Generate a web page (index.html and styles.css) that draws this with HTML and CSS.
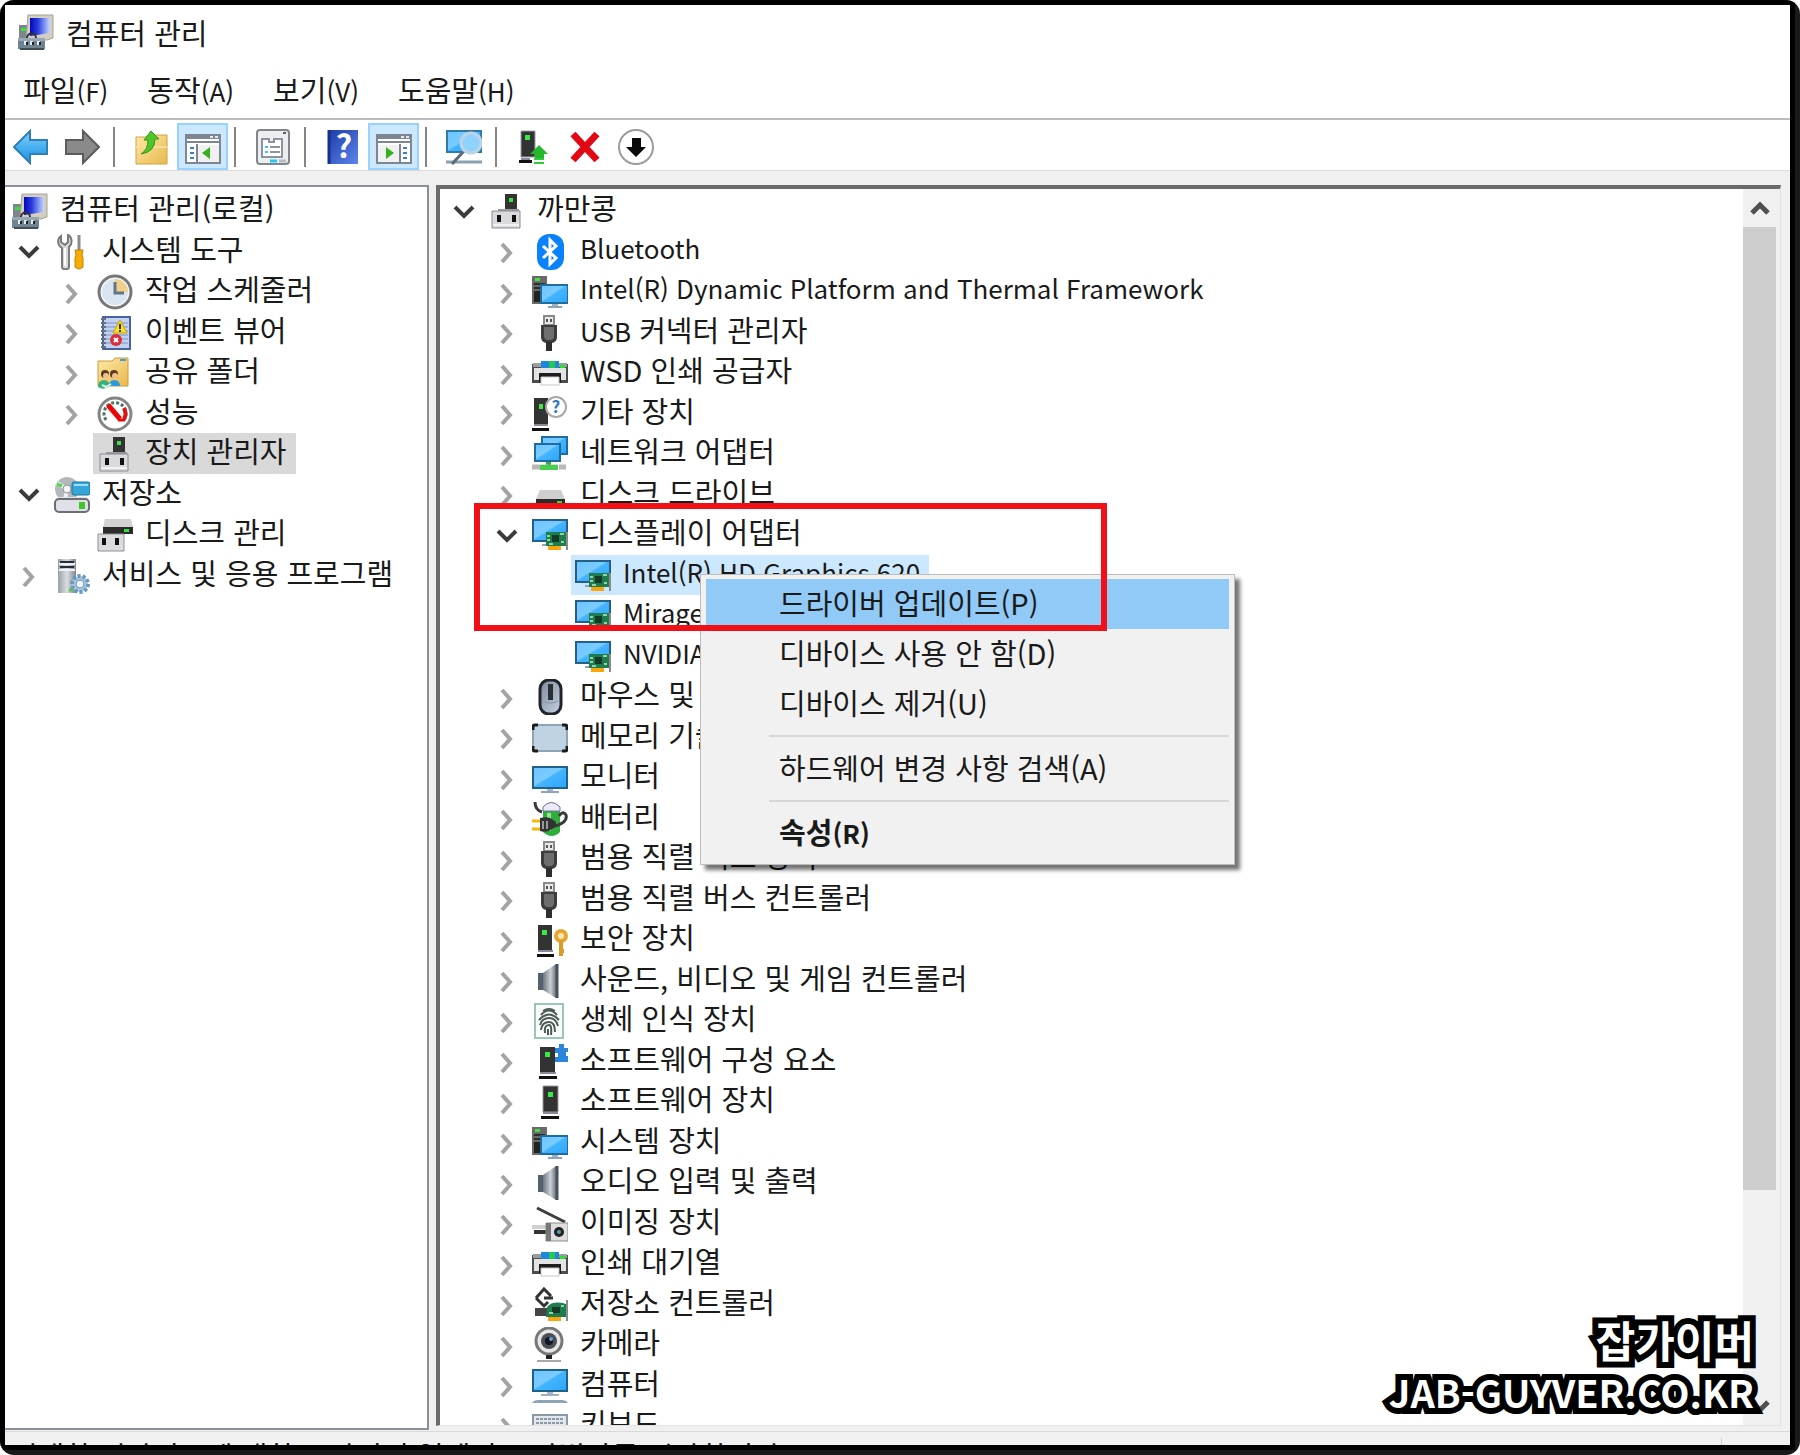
FILE: index.html
```html
<!DOCTYPE html>
<html lang="ko">
<head>
    <meta charset="UTF-8">
    <meta name="viewport" content="width=device-width, initial-scale=1.0">
    <title>컴퓨터 관리</title>
    <link rel="stylesheet" href="styles.css">
</head>
<body>
<!-- Icon set, every icon is drawn on a 36x36 grid -->
<svg class="sprite" aria-hidden="true">
    <defs>
        <linearGradient id="screen" x1="0" y1="0" x2="1" y2="1">
            <stop offset="0" stop-color="#6cc4ff"/><stop offset=".45" stop-color="#7accff"/><stop offset=".5" stop-color="#45b4ff"/><stop offset="1" stop-color="#2ba6fa"/>
        </linearGradient>
        <linearGradient id="navy" x1="0" y1="0" x2="1" y2="0">
            <stop offset="0" stop-color="#0606b8"/><stop offset=".4" stop-color="#2a3fe0"/><stop offset="1" stop-color="#c4d8ff"/>
        </linearGradient>
        <linearGradient id="steel" x1="0" y1="0" x2="1" y2="0">
            <stop offset="0" stop-color="#6d7780"/><stop offset=".5" stop-color="#c9d0d6"/><stop offset="1" stop-color="#4a545e"/>
        </linearGradient>
        <linearGradient id="folder" x1="0" y1="0" x2="1" y2="1">
            <stop offset="0" stop-color="#ffe9a6"/><stop offset="1" stop-color="#e8b84e"/>
        </linearGradient>
        <linearGradient id="blueArrow" x1="0" y1="0" x2="0" y2="1">
            <stop offset="0" stop-color="#7fd0ff"/><stop offset="1" stop-color="#1492e4"/>
        </linearGradient>
        <linearGradient id="help" x1="0" y1="0" x2="1" y2="1">
            <stop offset="0" stop-color="#1d3aa8"/><stop offset="1" stop-color="#5b86ec"/>
        </linearGradient>
        <linearGradient id="mouseBody" x1="0" y1="0" x2="1" y2="1">
            <stop offset="0" stop-color="#7d8a9b"/><stop offset="1" stop-color="#c6d3e2"/>
        </linearGradient>
    </defs>

    <symbol id="i-computer-mgmt" viewBox="0 0 36 36">
        <path d="M1 11h10v14H1z" fill="#7c868c"/><path d="M3 14h5v3H3z" fill="#38e038"/>
        <path d="M10 1h25v23l-6 2H8z" fill="#d3cec2" stroke="#a8a294"/>
        <path d="M12 4h20v15l-20 3z" fill="url(#navy)"/>
        <path d="M9 24c0-6 9-6 9 0" fill="none" stroke="#333" stroke-width="2"/>
        <path d="M0 25h27v10H0z" fill="#6f8492"/><path d="M0 24h27v3H0z" fill="#95a7b2"/>
        <path d="M2 35h24" stroke="#3f4d57" stroke-width="2"/>
        <path d="M6 27h3v4H6zM12 27h3v4h-3zM19 27h3v4h-3z" fill="#e4edf2"/><path d="M8 28h2v3H8zM14 28h2v3h-2zM21 28h2v3h-2z" fill="#222"/>
    </symbol>
    <symbol id="i-tools" viewBox="0 0 36 36">
        <path d="M7 2v6l4 3 3-3V1c4 2 5 8 1 12v20c0 3-7 3-7 0V14C3 11 3 5 7 2z" fill="#d9d9d9" stroke="#7b7b7b" stroke-width="2"/>
        <path d="M11 14v18" stroke="#fff" stroke-width="2"/>
        <path d="M25 1v16" stroke="#8c8c8c" stroke-width="3"/>
        <path d="M21 16h8l-1 5 1 3v9q-4 4-8 0v-9l1-3z" fill="#f7ab05" stroke="#c78100"/>
    </symbol>
    <symbol id="i-clock" viewBox="0 0 36 36">
        <circle cx="18" cy="18" r="16" fill="#f4f6f8" stroke="#777" stroke-width="3"/>
        <circle cx="18" cy="18" r="13" fill="#d9e6f1"/>
        <path d="M18 18V5a13 13 0 0 1 13 13z" fill="#f2ce8c"/>
        <path d="M18 8v11h9" fill="none" stroke="#5f7686" stroke-width="3"/>
    </symbol>
    <symbol id="i-event" viewBox="0 0 36 36">
        <path d="M6 2h27v32H6z" fill="#c2d2ee" stroke="#4b62a2" stroke-width="2"/>
        <path d="M9 8h22M9 12h22M9 16h22M9 20h22M9 24h22M9 28h22" stroke="#7a94c8"/>
        <path d="M4 4h5M4 8h5M4 12h5M4 16h5M4 20h5M4 24h5M4 28h5M4 32h5" stroke="#66707e" stroke-width="2"/>
        <path d="M23 5l7 13H16z" fill="#ffdf1f" stroke="#c8a400"/><path d="M23 9v5M23 15v2" stroke="#332" stroke-width="2"/>
        <circle cx="19" cy="25" r="6" fill="#d9303c"/><path d="M17 23l4 4M21 23l-4 4" stroke="#fff" stroke-width="2"/>
    </symbol>
    <symbol id="i-shared" viewBox="0 0 36 36">
        <path d="M1 6h14l3-3h13v28H1z" fill="url(#folder)" stroke="#c89c3c"/>
        <path d="M23 5h6" stroke="#4b9be0" stroke-width="2"/>
        <circle cx="8" cy="19" r="4" fill="#5a3a20"/><circle cx="17" cy="19" r="4" fill="#5a3a20"/>
        <circle cx="9" cy="21" r="3" fill="#f1c08c"/><circle cx="18" cy="21" r="3" fill="#f1c08c"/>
        <path d="M12 31q0-6 5-6 6 0 6 6z" fill="#2d9bd8"/><path d="M1 32q0-7 6-7 5 0 6 6-6 5-12 1z" fill="#36b27a"/>
        <path d="M5 30l4 2 5-3" fill="none" stroke="#d8f4e8" stroke-width="2"/>
    </symbol>
    <symbol id="i-gauge" viewBox="0 0 36 36">
        <circle cx="18" cy="18" r="16" fill="#fff" stroke="#858585" stroke-width="3"/>
        <path d="M9 24a11 11 0 1 1 18 0" fill="none" stroke="#4c7466" stroke-width="3" stroke-dasharray="3 2"/>
        <path d="M27 12q3 6 0 11" fill="none" stroke="#e01414" stroke-width="4"/>
        <path d="M11 9l12 14" stroke="#e80808" stroke-width="5"/><path d="M21 24h7" stroke="#e80808" stroke-width="3"/>
    </symbol>
    <symbol id="i-device-mgr" viewBox="0 0 36 36">
        <path d="M16 1h12v16H16z" fill="#333"/><path d="M20 5h4v4h-4z" fill="#3be04a"/>
        <path d="M9 16h21v3H9z" fill="#9a9a9e"/>
        <path d="M3 18h28v17H3z" fill="#d9d9de" stroke="#8c8c92"/><path d="M4 32h26" stroke="#f2f2f5" stroke-width="2"/>
        <path d="M8 22h4v7H8zM23 22h4v7h-4z" fill="#111"/>
    </symbol>
    <symbol id="i-storage" viewBox="0 0 36 36">
        <circle cx="13" cy="12" r="12" fill="#b4b8ba"/><path d="M3 6l10 6M13 12l-2 11" stroke="#eef0f0" stroke-width="4"/>
        <circle cx="13" cy="12" r="4" fill="#f4f4f4" stroke="#8f9496"/><path d="M3 7l5 2" stroke="#54d454" stroke-width="3"/>
        <rect x="18" y="5" width="18" height="13" rx="2" fill="#35a6d8" stroke="#18729c"/><path d="M20 8h14" stroke="#9ddcf5" stroke-width="2"/>
        <path d="M3 20h30l2 4H1z" fill="#e3e4e8"/><rect x="1" y="22" width="34" height="13" rx="4" fill="#dfe0e8" stroke="#6c6e76" stroke-width="2"/>
        <path d="M25 25h6v7h-6z" fill="#40c62d"/>
    </symbol>
    <symbol id="i-disk-mgmt" viewBox="0 0 36 36">
        <path d="M8 2h26l2 8H6z" fill="#d2d2d2"/><path d="M6 10h30v7H6z" fill="#2b2b2b"/><path d="M27 12h5v3h-5z" fill="#2fe03c"/>
        <path d="M1 17h26v17H1z" fill="#dcdce0" stroke="#909096"/><path d="M5 21h4v7H5zM18 21h4v7h-4z" fill="#111"/>
    </symbol>
    <symbol id="i-services" viewBox="0 0 36 36">
        <path d="M4 1h18v34H4z" fill="url(#steel)" opacity=".7"/><path d="M6 4h14M6 9h14" stroke="#23303a" stroke-width="2"/>
        <path d="M5 6h16M5 12h16" stroke="#eef2f4" stroke-width="2"/>
        <circle cx="26" cy="26" r="8" fill="#a9c8e4" stroke="#6f98be" stroke-width="4" stroke-dasharray="3 2"/><circle cx="26" cy="26" r="4" fill="#eef4fa" stroke="#6f98be"/>
        <path d="M15 32h4" stroke="#55c455" stroke-width="3"/>
    </symbol>
    <symbol id="i-bluetooth" viewBox="0 0 36 36">
        <rect x="5" y="0" width="27" height="36" rx="12" fill="#0a82fe"/>
        <path d="M11 12l13 12-6 6V6l6 6-13 12" fill="none" stroke="#fff" stroke-width="3"/>
    </symbol>
    <symbol id="i-system" viewBox="0 0 36 36">
        <path d="M0 2h15v28H0z" fill="#6a6a6a"/><path d="M2 10h11M2 14h11" stroke="#2c2c2c" stroke-width="2"/><path d="M2 17h8v11H2z" fill="#222"/>
        <path d="M3 4h5v3H3z" fill="#46e046"/>
        <path d="M9 11h27v18H9z" fill="url(#screen)" stroke="#1f6da0" stroke-width="2"/>
        <path d="M20 30h6v2h-6z" fill="#9fb2c4"/><path d="M16 33h14" stroke="#8ea3b8" stroke-width="2"/>
    </symbol>
    <symbol id="i-usb" viewBox="0 0 36 36">
        <path d="M12 1h10v9H12z" fill="#e8e8e8" stroke="#8a8a8a" stroke-width="2"/><path d="M14 4h2v3h-2zM18 4h2v3h-2z" fill="#555"/>
        <path d="M9 10h16v12q0 5-5 6h-6q-5-1-5-6z" fill="#3d3d3d"/><path d="M12 12h10v9q0 3-3 4h-4q-3-1-3-4z" fill="#6e6e6e"/>
        <path d="M14 27h6v9h-6z" fill="#2e2e2e"/>
    </symbol>
    <symbol id="i-printer" viewBox="0 0 36 36">
        <path d="M0 9h9v19H0zM27 9h9v19h-9z" fill="#4d4d4d"/><path d="M1 8h8v4H1zM27 8h8v4h-8z" fill="#9c9c9c"/>
        <path d="M9 6h18v8H9z" fill="#1d86e0"/><path d="M17 6h6v8h-6z" fill="#22c94e"/>
        <path d="M2 13h32v12H2z" fill="#e3e3e3"/><path d="M28 10h5v3h-5z" fill="#2be02b"/>
        <path d="M7 18h22v10H7z" fill="#1d1d1d"/><path d="M9 22h18v8H9z" fill="#fff" stroke="#c7c7c7"/>
    </symbol>
    <symbol id="i-unknown" viewBox="0 0 36 36">
        <path d="M2 2h14v28H2z" fill="#333"/><path d="M7 8h4v5H7z" fill="#38ea42"/><path d="M2 29h14" stroke="#889" stroke-width="2"/><path d="M0 32h17v3H0z" fill="#111"/>
        <circle cx="24" cy="11" r="10" fill="#fff" stroke="#a8a8a8" stroke-width="2"/>
        <text x="24" y="17" class="mark" text-anchor="middle" fill="#2a78c8">?</text>
    </symbol>
    <symbol id="i-network" viewBox="0 0 36 36">
        <path d="M10 1h25v17H10z" fill="url(#screen)" stroke="#1f6da0" stroke-width="2"/>
        <path d="M3 8h25v17H3z" fill="url(#screen)" stroke="#1f6da0" stroke-width="2"/>
        <path d="M14 26h5v3h-5z" fill="#3aa84a"/><path d="M0 31h34" stroke="#b8b8b8" stroke-width="5" stroke-dasharray="8 1"/><path d="M8 29h18v5H8z" fill="#49cf4d"/>
    </symbol>
    <symbol id="i-disk" viewBox="0 0 36 36">
        <path d="M8 13h21l4 9H4z" fill="#cfcfcf"/><path d="M4 22h29v8H4z" fill="#2a2a2a"/><path d="M25 24h5v4h-5z" fill="#2fe03c"/>
    </symbol>
    <symbol id="i-display" viewBox="0 0 36 36">
        <path d="M1 3h34v21H1z" fill="url(#screen)" stroke="#245f88" stroke-width="2"/>
        <path d="M10 28h8" stroke="#8ea3b8" stroke-width="2"/>
        <path d="M14 15h20v14H14z" fill="#1d7d4c"/><path d="M15 19h3M15 23h3M28 17h4M29 25h3M17 27h4" stroke="#8fd3a6" stroke-width="2"/><path d="M20 18h7v7h-7z" fill="#17392a"/>
        <path d="M35 15v18" stroke="#8b8b8b" stroke-width="2"/><path d="M16 29h13v4H16z" fill="#fba40c"/>
    </symbol>
    <symbol id="i-mouse" viewBox="0 0 36 36">
        <rect x="8" y="1" width="21" height="34" rx="9" fill="url(#mouseBody)" stroke="#20252b" stroke-width="3"/>
        <path d="M16 5h5v16h-5z" fill="#2b3036"/><path d="M11 22q7 4 15 0" fill="none" stroke="#8794a4"/>
    </symbol>
    <symbol id="i-memory" viewBox="0 0 36 36">
        <rect x="1" y="5" width="34" height="26" rx="3" fill="#c0d3e2" stroke="#8fa3b2" stroke-width="2"/>
        <path d="M1 10V7q0-2 2-2h3M30 5h3q2 0 2 2v3M1 26v3q0 2 2 2h3M30 31h3q2 0 2-2v-3" fill="none" stroke="#1c1c1c" stroke-width="3"/>
    </symbol>
    <symbol id="i-monitor" viewBox="0 0 36 36">
        <path d="M1 7h34v21H1z" fill="url(#screen)" stroke="#1f6288" stroke-width="2"/>
        <path d="M15 29h6v2h-6z" fill="#a7b6c4"/><path d="M9 32h18" stroke="#8ea3b8" stroke-width="2"/>
    </symbol>
    <symbol id="i-battery" viewBox="0 0 36 36">
        <path d="M11 6q8-9 17 0v25q-8 8-17 0z" fill="#2fae3c"/><path d="M11 6q8-9 17 0v4H11z" fill="#eceaf6" stroke="#7a6fa8"/>
        <path d="M15 12h4v18h-4z" fill="#8fe896"/>
        <path d="M3 1q0 8 7 10M24 25q12-4 10-11-3-5-7 1" fill="none" stroke="#3a3a3a" stroke-width="3"/>
        <path d="M0 20h9M0 28h9" stroke="#f2b90c" stroke-width="3"/>
        <path d="M8 17q8-2 12 1l4 3v5l-4 2q-4 4-12 2z" fill="#333"/><path d="M11 20v8M15 20v8" stroke="#999" stroke-width="2"/>
    </symbol>
    <symbol id="i-security" viewBox="0 0 36 36">
        <path d="M6 3h14v25H6z" fill="#333"/><path d="M10 8h5v5h-5z" fill="#38ea42"/><path d="M6 29h15" stroke="#889" stroke-width="2"/><path d="M5 32h17v3H5z" fill="#111"/>
        <circle cx="29" cy="14" r="5" fill="#fbe6b4" stroke="#e3a633" stroke-width="4"/><path d="M29 19v15M29 29h3" stroke="#d99a28" stroke-width="4"/>
    </symbol>
    <symbol id="i-sound" viewBox="0 0 36 36">
        <path d="M6 10h7v17H6z" fill="#56616b"/><path d="M11 10L24 1q4 17 0 34L11 27z" fill="url(#steel)"/><path d="M25 1v34" stroke="#48525c" stroke-width="3"/>
    </symbol>
    <symbol id="i-finger" viewBox="0 0 36 36">
        <path d="M3 1h28v34H3z" fill="#fafcfb" stroke="#9cc4ba" stroke-width="2"/>
        <path d="M9 12q8-9 16 0M7 17q10-11 20 0M8 22q2-7 9-7t9 8M9 27q1-8 8-8 6 0 6 10M13 30q-1-8 4-8 3 0 2 10M16 32v-6M11 8q6-4 12 0" fill="none" stroke="#4c5a57" stroke-width="2"/>
    </symbol>
    <symbol id="i-soft-comp" viewBox="0 0 36 36">
        <path d="M8 3h15v25H8z" fill="#333"/><path d="M13 8h5v5h-5z" fill="#38ea42"/><path d="M8 29h16" stroke="#889" stroke-width="2"/><path d="M7 32h18v3H7z" fill="#111"/>
        <path d="M23 4h4V0h5v4h4v4h-2v4h2v6H23v-5h3V9h-3z" fill="#2a86d8"/>
    </symbol>
    <symbol id="i-soft-dev" viewBox="0 0 36 36">
        <path d="M11 2h15v26H11z" fill="#333" stroke="#9a9a9a"/><path d="M16 8h5v5h-5z" fill="#38ea42"/><path d="M11 29h15" stroke="#889" stroke-width="2"/><path d="M9 32h18v3H9z" fill="#111"/>
    </symbol>
    <symbol id="i-imaging" viewBox="0 0 36 36">
        <path d="M5 2l28 14" stroke="#3c3c3c" stroke-width="3"/>
        <path d="M0 19h14v4H0z" fill="#cfcfcf"/><path d="M2 24h12v4H2z" fill="#333"/>
        <path d="M14 17h22v18H14z" fill="#dedede" stroke="#8d8d8d"/><path d="M14 17h5v18h-5z" fill="#777"/>
        <circle cx="27" cy="26" r="5" fill="#222"/><circle cx="27" cy="26" r="2" fill="#52a2a8"/>
    </symbol>
    <symbol id="i-storage-ctl" viewBox="0 0 36 36">
        <path d="M3 21h14v8H3z" fill="#444"/><path d="M4 11l8-9 7 7M4 11l8 8 4-4M12 11h9" fill="none" stroke="#333" stroke-width="3"/>
        <path d="M15 20q6-7 19-3v13H14z" fill="#1d7d4c"/><path d="M20 20h8v6h-8z" fill="#17392a"/><path d="M17 26h4M29 19h3" stroke="#8fd3a6" stroke-width="2"/>
        <path d="M35 13v21" stroke="#8b8b8b" stroke-width="2"/><path d="M16 30h13v4H16z" fill="#fba40c"/>
    </symbol>
    <symbol id="i-camera" viewBox="0 0 36 36">
        <circle cx="17" cy="14" r="13" fill="#e6e6e6" stroke="#777" stroke-width="3"/><circle cx="17" cy="14" r="8" fill="#4a4f55"/><circle cx="17" cy="14" r="4" fill="#10151f"/><circle cx="19" cy="12" r="2" fill="#6a9ad0"/>
        <path d="M14 28h6v4h-6z" fill="#222"/><path d="M5 34h24" stroke="#a8a8a8" stroke-width="2"/>
    </symbol>
    <symbol id="i-pc" viewBox="0 0 36 36">
        <path d="M1 2h34v21H1z" fill="url(#screen)" stroke="#1f6288" stroke-width="2"/>
        <path d="M15 24h6v2h-6z" fill="#a7b6c4"/><path d="M9 27h18" stroke="#9fb0c0" stroke-width="2"/><path d="M0 35q2-3 6-3h24q4 0 6 3z" fill="#8ea3b8"/>
    </symbol>
    <symbol id="i-keyboard" viewBox="0 0 36 36">
        <path d="M1 7h34v18H1z" fill="#e4e8ec" stroke="#8b98a5" stroke-width="2"/><path d="M4 11h28M4 15h28M4 19h28" stroke="#8b98a5" stroke-width="2" stroke-dasharray="3 1"/>
    </symbol>

    <symbol id="t-back" viewBox="0 0 36 36"><path d="M1 18L17 2v9h17v14H17v9z" fill="url(#blueArrow)" stroke="#2f7fb4" stroke-width="2"/></symbol>
    <symbol id="t-forward" viewBox="0 0 36 36"><path d="M35 18L19 2v9H2v14h17v9z" fill="#8a8a8a" stroke="#5c5c5c" stroke-width="2"/></symbol>
    <symbol id="t-up" viewBox="0 0 36 36">
        <path d="M2 8h13l3-2h15v29H2z" fill="url(#folder)" stroke="#cfa04a"/><path d="M2 18h31" stroke="#f7dc95" stroke-width="2"/>
        <path d="M7 25q7-4 7-14h-4l7-9 8 8h-4q0 13-14 15z" fill="#4fc42b" stroke="#2f9a1a"/>
    </symbol>
    <symbol id="t-tree" viewBox="0 0 36 36">
        <path d="M1 6h34v28H1z" fill="#fff" stroke="#7d8794" stroke-width="2"/><path d="M1 6h34v4H1z" fill="#7d8794"/><path d="M1 13h34M12 15v19" stroke="#7d8794" stroke-width="2"/><path d="M25 8h3M30 8h3" stroke="#e4e9f0" stroke-width="2"/>
        <path d="M13 16h21v17H13z" fill="#f1f1f1"/><path d="M5 19h4M5 24h4M5 29h4" stroke="#3c7fc4" stroke-width="2"/><path d="M25 18v12l-8-6z" fill="#35b020"/>
    </symbol>
    <symbol id="t-action" viewBox="0 0 36 36">
        <path d="M1 6h34v28H1z" fill="#fff" stroke="#7d8794" stroke-width="2"/><path d="M1 6h34v4H1z" fill="#7d8794"/><path d="M1 13h34M24 15v19" stroke="#7d8794" stroke-width="2"/><path d="M25 8h3M30 8h3" stroke="#e4e9f0" stroke-width="2"/>
        <path d="M2 16h21v17H2z" fill="#f1f1f1"/><path d="M27 19h4M27 24h4M27 29h4" stroke="#3c7fc4" stroke-width="2"/><path d="M10 18v12l8-6z" fill="#35b020"/>
    </symbol>
    <symbol id="t-props" viewBox="0 0 36 36">
        <rect x="2" y="1" width="32" height="34" rx="3" fill="#eceef0" stroke="#7f868e" stroke-width="2"/><path d="M28 4h3" stroke="#57606a" stroke-width="2"/>
        <path d="M7 10h7v3h5v-3h8v18H7z" fill="#fff" stroke="#8c94a0" stroke-width="2"/><path d="M15 18h10M15 23h10" stroke="#8c94a0" stroke-width="2"/><path d="M10 18h3M10 23h3" stroke="#37c8ee" stroke-width="2"/>
        <path d="M15 32h7" stroke="#22c8f4" stroke-width="3"/><path d="M24 32h7" stroke="#b6bcc2" stroke-width="3"/>
    </symbol>
    <symbol id="t-help" viewBox="0 0 36 36">
        <path d="M3 1h30v34H3z" fill="url(#help)"/><path d="M4 1v34" stroke="#16308e" stroke-width="3"/>
        <text x="19" y="29" class="help-mark" text-anchor="middle" fill="#fff">?</text>
    </symbol>
    <symbol id="t-scan" viewBox="0 0 36 36">
        <path d="M1 2h34v21H1z" fill="url(#screen)" stroke="#2f7ba8" stroke-width="2"/><path d="M0 33h36" stroke="#8aa0b4" stroke-width="3"/>
        <path d="M18 22L6 35" stroke="#5c6a76" stroke-width="3"/><circle cx="25" cy="14" r="10" fill="#8fd2fb" stroke="#bcd4e6" stroke-width="3"/>
    </symbol>
    <symbol id="t-update" viewBox="0 0 36 36">
        <path d="M5 2h14v26H5z" fill="#333" stroke="#98a0a4"/><path d="M9 6h5v5H9z" fill="#38ea42"/><path d="M5 30h9" stroke="#889" stroke-width="2"/><path d="M3 31h13v3H3z" fill="#111"/>
        <path d="M23 16l9 9h-4v4h-9v-4h-5z" fill="#25b82c"/><path d="M18 30h10M18 34h10" stroke="#2ecc35" stroke-width="2"/>
    </symbol>
    <symbol id="t-delete" viewBox="0 0 36 36"><path d="M6 5l24 26M30 5L6 31" stroke="#e30613" stroke-width="7"/></symbol>
    <symbol id="t-disable" viewBox="0 0 36 36">
        <circle cx="18" cy="18" r="17" fill="#fff" stroke="#9c9c9c" stroke-width="2"/><path d="M14 9h9v9h5l-10 10L8 18h6z" fill="#0a0a0a"/>
    </symbol>

    <symbol id="chevron" viewBox="0 0 22 22"><path d="M6 2l8 9-8 9" fill="none" stroke="#a3a3a3" stroke-width="4"/></symbol>
    <symbol id="chevron-open" viewBox="0 0 22 22"><path d="M2 5l9 9 9-9" fill="none" stroke="#3c3c3c" stroke-width="4"/></symbol>
</svg>

<div class="frame">
<div class="window">
    <header class="titlebar">
        <svg class="icon"><use href="#i-computer-mgmt"/></svg>
        <h1>컴퓨터 관리</h1>
    </header>

    <nav class="menubar">
        <button type="button">파일<span class="latin">(F)</span></button>
        <button type="button">동작<span class="latin">(A)</span></button>
        <button type="button">보기<span class="latin">(V)</span></button>
        <button type="button">도움말<span class="latin">(H)</span></button>
    </nav>

    <div class="toolbar">
        <button type="button" aria-label="뒤로"><svg class="icon"><use href="#t-back"/></svg></button>
        <button type="button" aria-label="앞으로"><svg class="icon"><use href="#t-forward"/></svg></button>
        <span class="divider"></span>
        <button type="button" aria-label="위로"><svg class="icon"><use href="#t-up"/></svg></button>
        <button type="button" class="active" aria-label="콘솔 트리"><svg class="icon"><use href="#t-tree"/></svg></button>
        <span class="divider"></span>
        <button type="button" aria-label="속성"><svg class="icon"><use href="#t-props"/></svg></button>
        <span class="divider"></span>
        <button type="button" aria-label="도움말"><svg class="icon"><use href="#t-help"/></svg></button>
        <button type="button" class="active" aria-label="작업 창"><svg class="icon"><use href="#t-action"/></svg></button>
        <span class="divider"></span>
        <button type="button" aria-label="하드웨어 변경 사항 검색"><svg class="icon"><use href="#t-scan"/></svg></button>
        <span class="divider"></span>
        <button type="button" aria-label="드라이버 업데이트"><svg class="icon"><use href="#t-update"/></svg></button>
        <button type="button" aria-label="디바이스 제거"><svg class="icon"><use href="#t-delete"/></svg></button>
        <button type="button" aria-label="디바이스 사용 안 함"><svg class="icon"><use href="#t-disable"/></svg></button>
    </div>

    <main class="panes">
        <section class="console">
            <ul class="tree">
                <li class="root"><span class="node"><svg class="icon"><use href="#i-computer-mgmt"/></svg>컴퓨터 관리(로컬)</span></li>
                <li><button type="button" class="toggle" aria-label="접기"><svg><use href="#chevron-open"/></svg></button><span class="node"><svg class="icon"><use href="#i-tools"/></svg>시스템 도구</span></li>
                <li class="level2"><button type="button" class="toggle" aria-label="펼치기"><svg><use href="#chevron"/></svg></button><span class="node"><svg class="icon"><use href="#i-clock"/></svg>작업 스케줄러</span></li>
                <li class="level2"><button type="button" class="toggle" aria-label="펼치기"><svg><use href="#chevron"/></svg></button><span class="node"><svg class="icon"><use href="#i-event"/></svg>이벤트 뷰어</span></li>
                <li class="level2"><button type="button" class="toggle" aria-label="펼치기"><svg><use href="#chevron"/></svg></button><span class="node"><svg class="icon"><use href="#i-shared"/></svg>공유 폴더</span></li>
                <li class="level2"><button type="button" class="toggle" aria-label="펼치기"><svg><use href="#chevron"/></svg></button><span class="node"><svg class="icon"><use href="#i-gauge"/></svg>성능</span></li>
                <li class="level2 leaf"><span class="node current"><svg class="icon"><use href="#i-device-mgr"/></svg>장치 관리자</span></li>
                <li><button type="button" class="toggle" aria-label="접기"><svg><use href="#chevron-open"/></svg></button><span class="node"><svg class="icon"><use href="#i-storage"/></svg>저장소</span></li>
                <li class="level2 leaf"><span class="node"><svg class="icon"><use href="#i-disk-mgmt"/></svg>디스크 관리</span></li>
                <li><button type="button" class="toggle" aria-label="펼치기"><svg><use href="#chevron"/></svg></button><span class="node"><svg class="icon"><use href="#i-services"/></svg>서비스 및 응용 프로그램</span></li>
            </ul>
        </section>

        <section class="devices">
            <ul class="tree">
                <li><button type="button" class="toggle" aria-label="접기"><svg><use href="#chevron-open"/></svg></button><span class="node"><svg class="icon"><use href="#i-device-mgr"/></svg>까만콩</span></li>
                <li class="level2"><button type="button" class="toggle" aria-label="펼치기"><svg><use href="#chevron"/></svg></button><span class="node latin"><svg class="icon"><use href="#i-bluetooth"/></svg>Bluetooth</span></li>
                <li class="level2"><button type="button" class="toggle" aria-label="펼치기"><svg><use href="#chevron"/></svg></button><span class="node latin"><svg class="icon"><use href="#i-system"/></svg>Intel(R) Dynamic Platform and Thermal Framework</span></li>
                <li class="level2"><button type="button" class="toggle" aria-label="펼치기"><svg><use href="#chevron"/></svg></button><span class="node"><svg class="icon"><use href="#i-usb"/></svg><span><span class="latin">USB</span> 커넥터 관리자</span></span></li>
                <li class="level2"><button type="button" class="toggle" aria-label="펼치기"><svg><use href="#chevron"/></svg></button><span class="node"><svg class="icon"><use href="#i-printer"/></svg>WSD 인쇄 공급자</span></li>
                <li class="level2"><button type="button" class="toggle" aria-label="펼치기"><svg><use href="#chevron"/></svg></button><span class="node"><svg class="icon"><use href="#i-unknown"/></svg>기타 장치</span></li>
                <li class="level2"><button type="button" class="toggle" aria-label="펼치기"><svg><use href="#chevron"/></svg></button><span class="node"><svg class="icon"><use href="#i-network"/></svg>네트워크 어댑터</span></li>
                <li class="level2"><button type="button" class="toggle" aria-label="펼치기"><svg><use href="#chevron"/></svg></button><span class="node"><svg class="icon"><use href="#i-disk"/></svg>디스크 드라이브</span></li>
                <li class="level2"><button type="button" class="toggle" aria-label="접기"><svg><use href="#chevron-open"/></svg></button><span class="node"><svg class="icon"><use href="#i-display"/></svg>디스플레이 어댑터</span></li>
                <li class="level3 leaf"><span class="node latin selected"><svg class="icon"><use href="#i-display"/></svg>Intel(R) HD Graphics 620</span></li>
                <li class="level3 leaf"><span class="node latin"><svg class="icon"><use href="#i-display"/></svg>Mirage</span></li>
                <li class="level3 leaf"><span class="node latin"><svg class="icon"><use href="#i-display"/></svg>NVIDIA</span></li>
                <li class="level2"><button type="button" class="toggle" aria-label="펼치기"><svg><use href="#chevron"/></svg></button><span class="node"><svg class="icon"><use href="#i-mouse"/></svg>마우스 및</span></li>
                <li class="level2"><button type="button" class="toggle" aria-label="펼치기"><svg><use href="#chevron"/></svg></button><span class="node"><svg class="icon"><use href="#i-memory"/></svg>메모리 기술</span></li>
                <li class="level2"><button type="button" class="toggle" aria-label="펼치기"><svg><use href="#chevron"/></svg></button><span class="node"><svg class="icon"><use href="#i-monitor"/></svg>모니터</span></li>
                <li class="level2"><button type="button" class="toggle" aria-label="펼치기"><svg><use href="#chevron"/></svg></button><span class="node"><svg class="icon"><use href="#i-battery"/></svg>배터리</span></li>
                <li class="level2"><button type="button" class="toggle" aria-label="펼치기"><svg><use href="#chevron"/></svg></button><span class="node"><svg class="icon"><use href="#i-usb"/></svg>범용 직렬 버스 장치</span></li>
                <li class="level2"><button type="button" class="toggle" aria-label="펼치기"><svg><use href="#chevron"/></svg></button><span class="node"><svg class="icon"><use href="#i-usb"/></svg>범용 직렬 버스 컨트롤러</span></li>
                <li class="level2"><button type="button" class="toggle" aria-label="펼치기"><svg><use href="#chevron"/></svg></button><span class="node"><svg class="icon"><use href="#i-security"/></svg>보안 장치</span></li>
                <li class="level2"><button type="button" class="toggle" aria-label="펼치기"><svg><use href="#chevron"/></svg></button><span class="node"><svg class="icon"><use href="#i-sound"/></svg>사운드, 비디오 및 게임 컨트롤러</span></li>
                <li class="level2"><button type="button" class="toggle" aria-label="펼치기"><svg><use href="#chevron"/></svg></button><span class="node"><svg class="icon"><use href="#i-finger"/></svg>생체 인식 장치</span></li>
                <li class="level2"><button type="button" class="toggle" aria-label="펼치기"><svg><use href="#chevron"/></svg></button><span class="node"><svg class="icon"><use href="#i-soft-comp"/></svg>소프트웨어 구성 요소</span></li>
                <li class="level2"><button type="button" class="toggle" aria-label="펼치기"><svg><use href="#chevron"/></svg></button><span class="node"><svg class="icon"><use href="#i-soft-dev"/></svg>소프트웨어 장치</span></li>
                <li class="level2"><button type="button" class="toggle" aria-label="펼치기"><svg><use href="#chevron"/></svg></button><span class="node"><svg class="icon"><use href="#i-system"/></svg>시스템 장치</span></li>
                <li class="level2"><button type="button" class="toggle" aria-label="펼치기"><svg><use href="#chevron"/></svg></button><span class="node"><svg class="icon"><use href="#i-sound"/></svg>오디오 입력 및 출력</span></li>
                <li class="level2"><button type="button" class="toggle" aria-label="펼치기"><svg><use href="#chevron"/></svg></button><span class="node"><svg class="icon"><use href="#i-imaging"/></svg>이미징 장치</span></li>
                <li class="level2"><button type="button" class="toggle" aria-label="펼치기"><svg><use href="#chevron"/></svg></button><span class="node"><svg class="icon"><use href="#i-printer"/></svg>인쇄 대기열</span></li>
                <li class="level2"><button type="button" class="toggle" aria-label="펼치기"><svg><use href="#chevron"/></svg></button><span class="node"><svg class="icon"><use href="#i-storage-ctl"/></svg>저장소 컨트롤러</span></li>
                <li class="level2"><button type="button" class="toggle" aria-label="펼치기"><svg><use href="#chevron"/></svg></button><span class="node"><svg class="icon"><use href="#i-camera"/></svg>카메라</span></li>
                <li class="level2"><button type="button" class="toggle" aria-label="펼치기"><svg><use href="#chevron"/></svg></button><span class="node"><svg class="icon"><use href="#i-pc"/></svg>컴퓨터</span></li>
                <li class="level2"><button type="button" class="toggle" aria-label="펼치기"><svg><use href="#chevron"/></svg></button><span class="node"><svg class="icon"><use href="#i-keyboard"/></svg>키보드</span></li>
            </ul>
            <div class="scrollbar">
                <button type="button" aria-label="위로 스크롤"><svg><path d="M3 15l8-8 8 8" fill="none" stroke="#505050" stroke-width="5"/></svg></button>
                <div class="track"><div class="thumb"></div></div>
                <button type="button" aria-label="아래로 스크롤"><svg><path d="M3 6l8 8 8-8" fill="none" stroke="#505050" stroke-width="5"/></svg></button>
            </div>
        </section>
    </main>

    <footer class="statusbar">
        <span>선택한 디바이스에 대한 드라이버 업데이트 마법사를 시작합니다.</span>
        <span class="grip"></span>
    </footer>

    <!-- Right-click menu of the selected adapter -->
    <div class="context-menu">
        <button type="button" class="hover">드라이버 업데이트(P)</button>
        <button type="button">디바이스 사용 안 함(D)</button>
        <button type="button">디바이스 제거(U)</button>
        <hr>
        <button type="button">하드웨어 변경 사항 검색(A)</button>
        <hr>
        <button type="button" class="default">속성<span class="latin">(R)</span></button>
    </div>
    <div class="highlight-box"></div>

    <div class="watermark">
        <p class="name">잡가이버</p>
        <p class="site">JAB-GUYVER.CO.KR</p>
    </div>
</div>
</div>
</body>
</html>
```

FILE: styles.css
```css
* {
    box-sizing: border-box;
}
body {
    margin: 0;
    background-color: #fff;
    color: #1a1a1a;
    font-family: "Noto Sans CJK KR", sans-serif;
    font-size: 29px;
    line-height: 34px;
}
button {
    padding: 0;
    border: none;
    background: none;
    color: inherit;
    font: inherit;
}
.sprite {
    position: absolute;
    width: 0;
    height: 0;
}
.icon {
    display: block;
    width: 36px;
    height: 36px;
    flex: none;
}
.latin {
    font-size: 26px;
}
.mark {
    font-size: 17px;
    font-weight: bold;
}
.help-mark {
    font-size: 32px;
    font-weight: bold;
}

/* Window */
.frame {
    height: 100vh;
    padding: 0 5px 5px 0;
    background-color: #1a1a1a;
    border-radius: 14px;
    overflow: hidden;
}
.window {
    position: relative;
    display: flex;
    flex-direction: column;
    height: 100%;
    border: 5px solid #000;
    background-color: #fff;
    overflow: hidden;
}
.titlebar {
    display: flex;
    align-items: center;
    gap: 12px;
    height: 56px;
    padding: 0 0 2px 13px;
}
.titlebar h1 {
    margin: 0;
    font-size: 29px;
    font-weight: normal;
}
.menubar {
    display: flex;
    align-items: flex-start;
    gap: 39px;
    height: 59px;
    padding: 11px 18px 0;
    border-bottom: 2px solid #bcbcc0;
}
.toolbar {
    display: flex;
    align-items: center;
    height: 51px;
    padding-top: 3px;
    border-bottom: 1px solid #dcdcdc;
}
.toolbar button {
    display: flex;
    align-items: center;
    justify-content: center;
    width: 51px;
    height: 47px;
}
.toolbar .active {
    background-color: #cce8ff;
    border: 2px solid #99d1ff;
}
.divider {
    width: 2px;
    height: 40px;
    margin: 0 11px 0 6px;
    background-color: #858585;
}

/* Panes */
.panes {
    display: flex;
    flex: 1;
    gap: 7px;
    min-height: 0;
    padding-top: 14px;
    background-color: #f0f0f0;
}
.console {
    width: 424px;
    flex: none;
    margin-bottom: 1px;
    border: 2px solid #8a8f9a;
    border-left: none;
    background-color: #fff;
    overflow: hidden;
}
.devices {
    display: flex;
    flex: 1;
    min-width: 0;
    margin: 0 9px 5px 0;
    border: 1px solid #e3e3e3;
    border-top: 4px solid #6b6b6b;
    border-left: 4px solid #6b6b6b;
    background-color: #fff;
    overflow: hidden;
}
.tree {
    display: grid;
    grid-auto-rows: 41px 40px 41px 40px;
    align-content: start;
    flex: 1;
    margin: 0;
    padding: 3px 2px 0;
    list-style: none;
}
.devices .tree {
    padding-top: 1px;
}
.tree li {
    display: flex;
    white-space: nowrap;
}
.tree .root {
    padding-left: 1px;
}
.tree .level2 {
    padding-left: 43px;
}
.tree .level2.leaf {
    padding-left: 86px;
}
.tree .level3 {
    padding-left: 129px;
}
.toggle {
    display: flex;
    align-items: center;
    justify-content: center;
    width: 43px;
    padding-top: 4px;
}
.toggle svg {
    width: 22px;
    height: 22px;
}
.node {
    display: flex;
    align-items: flex-start;
    gap: 12px;
    padding: 0 9px 0 4px;
}
.node .icon {
    margin-top: 3px;
}
.current {
    background-color: #d9d9d9;
}
.selected {
    background-color: #cce8ff;
}
.scrollbar {
    display: flex;
    flex-direction: column;
    width: 37px;
    padding-right: 4px;
    background-color: #f0f0f0;
}
.scrollbar button {
    height: 38px;
}
.scrollbar svg {
    display: block;
    width: 22px;
    height: 20px;
    margin: 0 auto;
}
.track {
    flex: 1;
}
.thumb {
    height: 83%;
    background-color: #cdcdcd;
}
.statusbar {
    display: flex;
    align-items: flex-start;
    justify-content: space-between;
    height: 14px;
    padding: 6px 68px 0 6px;
    border-top: 1px solid #d9d9d9;
    background-color: #f0f0f0;
    overflow: hidden;
}
.grip {
    width: 1px;
    height: 10px;
    background-color: #d0d0d0;
}

/* Overlays */
.context-menu {
    position: absolute;
    top: 569px;
    left: 695px;
    width: 535px;
    padding: 4px 5px 5px;
    border: 1px solid #bdbdbd;
    background-color: #f1f1f1;
    box-shadow: 5px 5px 4px rgba(0, 0, 0, 0.55);
}
.context-menu button {
    display: block;
    width: 100%;
    height: 50px;
    padding: 0 0 5px 73px;
    text-align: left;
}
.context-menu hr {
    height: 2px;
    margin: 6px 0 7px 63px;
    border: none;
    background-color: #d7d7d7;
}
.context-menu .hover {
    background-color: #91c9f7;
}
.context-menu .default {
    font-weight: bold;
}
.highlight-box {
    position: absolute;
    top: 498px;
    left: 469px;
    width: 633px;
    height: 128px;
    border: 6px solid #f01018;
}
.watermark {
    position: absolute;
    right: 36px;
    bottom: 27px;
    color: #fff;
    font-weight: bold;
    text-align: right;
    paint-order: stroke fill;
    stroke-linejoin: round;
    -webkit-text-stroke: 12px #000;
}
.watermark p {
    margin: 0;
}
.watermark .name {
    font-size: 43px;
    line-height: 54px;
}
.watermark .site {
    font-size: 38px;
    line-height: 52px;
}
```
